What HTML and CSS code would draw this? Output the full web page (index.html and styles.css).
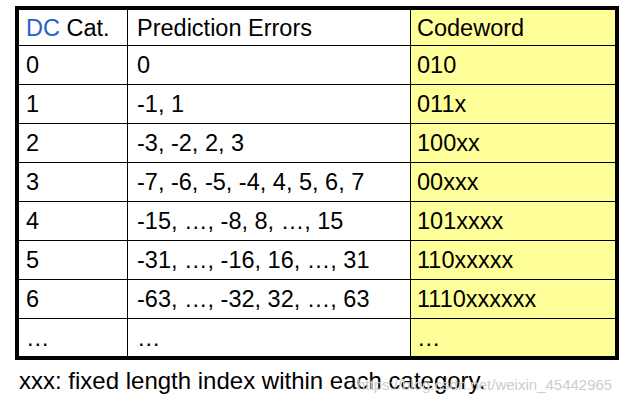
FILE: index.html
```html
<!DOCTYPE html>
<html>
<head>
<meta charset="utf-8">
<link rel="stylesheet" href="styles.css">
</head>
<body>
<div class="page">
  <div class="table">
    <div class="cell head"><span><span class="blue">DC</span> Cat.</span></div>
    <div class="cell head mid">Prediction Errors</div>
    <div class="cell head code">Codeword</div>

    <div class="cell">0</div>
    <div class="cell mid">0</div>
    <div class="cell code">010</div>

    <div class="cell">1</div>
    <div class="cell mid">-1, 1</div>
    <div class="cell code">011x</div>

    <div class="cell">2</div>
    <div class="cell mid">-3, -2, 2, 3</div>
    <div class="cell code">100xx</div>

    <div class="cell">3</div>
    <div class="cell mid">-7, -6, -5, -4, 4, 5, 6, 7</div>
    <div class="cell code">00xxx</div>

    <div class="cell">4</div>
    <div class="cell mid">-15, …, -8, 8, …, 15</div>
    <div class="cell code">101xxxx</div>

    <div class="cell">5</div>
    <div class="cell mid">-31, …, -16, 16, …, 31</div>
    <div class="cell code">110xxxxx</div>

    <div class="cell">6</div>
    <div class="cell mid">-63, …, -32, 32, …, 63</div>
    <div class="cell code">1110xxxxxx</div>

    <div class="cell last">…</div>
    <div class="cell mid last">…</div>
    <div class="cell code last">…</div>
  </div>
  <p class="note">xxx: fixed length index within each category.</p>
  <span class="watermark">https://blog.csdn.net/weixin_45442965</span>
</div>
</body>
</html>
```
FILE: styles.css
```css
html, body {
  margin: 0;
  padding: 0;
  background: #ffffff;
}

.page {
  position: relative;
  width: 625px;
  height: 405px;
  padding: 6px 0 0 15px;
  box-sizing: border-box;
  font-family: "Liberation Sans", Arial, sans-serif;
  color: #000;
}

.table {
  display: grid;
  grid-template-columns: 109px 283px 204px;
  grid-template-rows: 36px repeat(7, 39px) 37px;
  width: 596px;
  border: 4px solid #000;
  font-size: 23.5px;
}

.cell {
  box-sizing: border-box;
  display: flex;
  align-items: center;
  padding: 2px 0 0 7px;
  border-right: 1px solid #000;
  border-bottom: 1px solid #000;
  white-space: nowrap;
  line-height: 1;
}

.cell.mid {
  padding-left: 9px;
}

.cell.code {
  background: #ffff99;
  border-right: none;
  padding-left: 6px;
}

.cell.last {
  border-bottom: none;
}

.blue {
  color: #2a5fc8;
}

.note {
  margin: 7px 0 0 4px;
  font-size: 24px;
  line-height: 27px;
}

.watermark {
  position: absolute;
  left: 357px;
  top: 376px;
  font-size: 15px;
  color: #cdcdcd;
  white-space: nowrap;
}
```
